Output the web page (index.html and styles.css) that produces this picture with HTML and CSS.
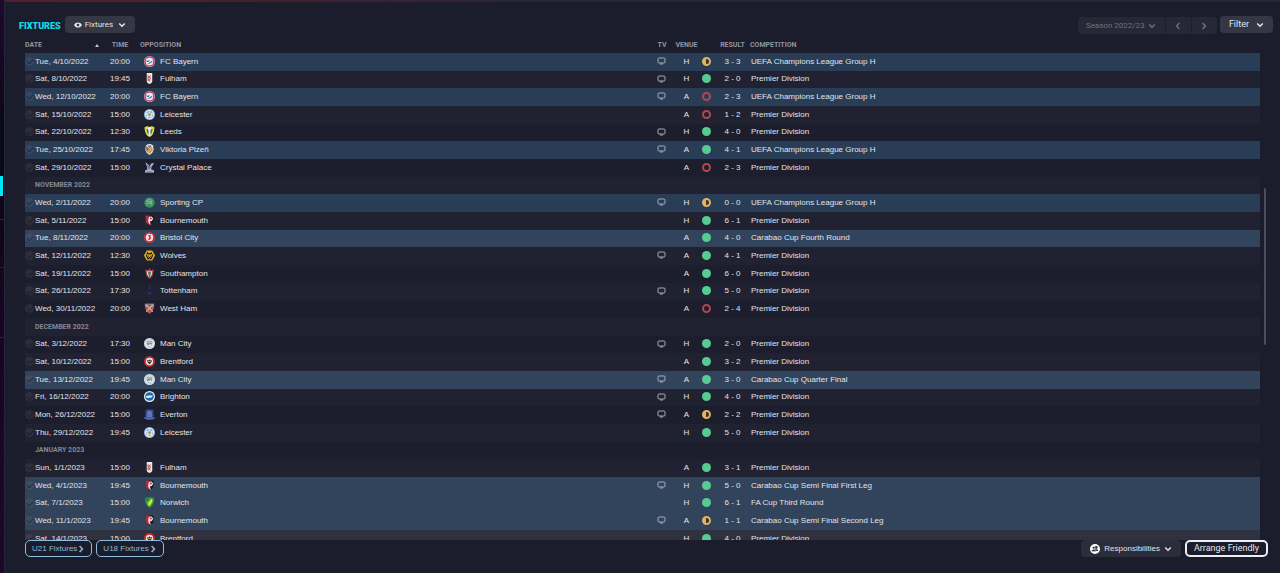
FILE: index.html
```html
<!DOCTYPE html>
<html lang="en">
<head>
<meta charset="utf-8">
<meta name="viewport" content="width=device-width, initial-scale=1">
<title>Fixtures</title>
<link rel="stylesheet" href="styles.css">
</head>
<body>
<svg class="defs" aria-hidden="true">
  <symbol id="down" viewBox="0 0 8 8"><path d="M1.2 2.5 4 5.3l2.8-2.8" fill="none" stroke="currentColor" stroke-width="1.5"/></symbol>
  <symbol id="left" viewBox="0 0 8 8"><path d="M5.4 1 2.6 4l2.8 3" fill="none" stroke="currentColor" stroke-width="1.3"/></symbol>
  <symbol id="right" viewBox="0 0 8 8"><path d="M2.6 1 5.4 4 2.6 7" fill="none" stroke="currentColor" stroke-width="1.5"/></symbol>
  <symbol id="eye" viewBox="0 0 16 12"><path fill="currentColor" fill-rule="evenodd" d="M0 6C2 2 5 .8 8 .8S14 2 16 6c-2 4-5 5.200-8 5.200S2 10 0 6Zm8-2.600a2.600 2.600 0 1 0 0 5.200 2.600 2.600 0 0 0 0-5.200Z"/></symbol>
  <symbol id="people" viewBox="0 0 20 20"><circle cx="10" cy="10" r="10" fill="#fff"/><circle cx="12.500" cy="7" r="2.800" fill="#30323f"/><path d="M8.500 14c0-5 8-5 8 0Z" fill="#30323f"/><circle cx="7.500" cy="7.500" r="2.600" fill="#30323f" stroke="#fff" stroke-width=".8"/><path d="M3 15c0-6 9-6 9 0Z" fill="#30323f" stroke="#fff" stroke-width=".8"/></symbol>
  <symbol id="tv" viewBox="0 0 9 8"><rect x="1" y="1" width="7" height="5" rx="1" fill="none" stroke="currentColor"/><path d="M3 7h3" stroke="currentColor"/></symbol>

  <symbol id="bayern" viewBox="0 0 24 24"><circle cx="12" cy="12" r="12" fill="#e3a9b8"/><circle cx="12" cy="12" r="9.500" fill="none" stroke="#cf3657" stroke-width="3"/><circle cx="12" cy="12" r="8" fill="#e9edf6"/><path d="M5 10h8l-3 3H6Zm5 5 8-5v3l-6 4H8Z" fill="#3f78bd"/></symbol>
  <symbol id="fulham" viewBox="0 0 24 24"><path d="M6 0h12v18q0 5-6 6-6-1-6-6Z" fill="#f0e9e9"/><path d="M9 5v13M15 6l-5 3 5 3-5 3 4 3" fill="none" stroke="#b34145" stroke-width="2"/></symbol>
  <symbol id="leicester" viewBox="0 0 24 24"><circle cx="12" cy="12" r="12" fill="#7fa9dc"/><circle cx="12" cy="12" r="9" fill="none" stroke="#d7e3f1" stroke-width="3"/><path d="m12 3 2.500 5.500L21 9l-4 5 1 6-6-3-6 3 1-6-4-5 6.500-.5Z" fill="#e3e6d8"/><path d="m12 8 4 4-4 5-4-5Z" fill="#a99b65"/></symbol>
  <symbol id="leeds" viewBox="0 0 24 24"><path d="M1 3q6-4 11-1 5-3 11 1-1 17-11 21Q2 20 1 3Z" fill="#dfd93f"/><path d="M5 7h14q-1 9-7 13Q6 16 5 7Z" fill="#396c9a"/><path d="M12 5v16" stroke="#eef3ed" stroke-width="4"/><circle cx="12" cy="6" r="3.500" fill="#f3f5dc"/></symbol>
  <symbol id="plzen" viewBox="0 0 24 24"><path d="M4 3q8-6 16 0l1 10q-2 8-9 11-7-3-9-11Z" fill="#e8e2df"/><path d="m5 4 9 10-3 5-6-5Z" fill="#9a5149"/><path d="m9 12 9-6 1 8-7 8-6-6Z" fill="#c9a34b"/><path d="m7 4 10-1-4 6Z" fill="#65718e"/></symbol>
  <symbol id="palace" viewBox="0 0 24 24"><path d="m3 1 7 5 2 5 3-7 7-2-5 8-2 7H8L6 8Z" fill="#bdd4e9"/><path d="m6 4 5 6-2 5Zm12 0-5 8 2 2Z" fill="#3e69ad"/><path d="M3 18q9-4 18 0l1 5H2Z" fill="#ccd0df"/><path d="M5 20h14" stroke="#5a6a97" stroke-width="2"/><path d="m10 12 2-2 2 6h-4Z" fill="#bc4b62"/></symbol>
  <symbol id="sporting" viewBox="0 0 24 24"><circle cx="12" cy="12" r="11.500" fill="#368459"/><circle cx="12" cy="12" r="8" fill="none" stroke="#5aa27a" stroke-width="2"/><path d="M7 17V8q5-5 9 0v9M9 10h6l-5 4h6" fill="none" stroke="#94bca5" stroke-width="2"/></symbol>
  <symbol id="bournemouth" viewBox="0 0 24 24"><path d="M3 1h18l-1 16-8 7-8-7Z" fill="#25141c"/><path d="M3 1h9v22l-8-6Z" fill="#ad2e3b"/><path d="m9 11 2-7 6-1 3 5-3 5-4 1 2 9-5-6Z" fill="#ece3e4"/><circle cx="15" cy="7.500" r="2.200" fill="#bc3341"/></symbol>
  <symbol id="bristol" viewBox="0 0 24 24"><circle cx="12" cy="12" r="12" fill="#d52d36"/><circle cx="12" cy="12" r="8" fill="#f6e9e9"/><path d="m9 7 6-1-1 5 2 2-4 5-4-3 4-2Z" fill="#c63440"/></symbol>
  <symbol id="wolves" viewBox="0 0 24 24"><path d="M6 1h12l6 11-6 11H6L0 12Z" fill="#deb21c"/><path d="m8 4 2 3h4l2-3 4 8-4 8H8l-4-8Z" fill="#18150f"/><path d="m5 8 5 2h4l5-2-3 7-4 4-4-4Z" fill="#deb21c"/><path d="m8 12 3 1-2 2Zm8 0-3 1 2 2Zm-5 3h2v3h-2Z" fill="#18150f"/></symbol>
  <symbol id="southampton" viewBox="0 0 24 24"><path d="m12 0 3 5 7-2-2 7q1 7-8 14Q3 17 4 10L2 3l7 2Z" fill="#a84650"/><path d="M6 7h12l-1 7-5 7-5-7Z" fill="#e2dfd8"/><path d="M8 8h8l-2 7h-4Z" fill="#56845e"/><path d="M12 14v7" stroke="#be4854" stroke-width="3"/></symbol>
  <symbol id="spurs" viewBox="0 0 24 24"><circle cx="12" cy="18" r="4" fill="#2b2c6b"/><path d="m10 2 4-1-1 4 2 2-2 3-3-2 1-2Z" fill="#2b2c6b"/></symbol>
  <symbol id="westham" viewBox="0 0 24 24"><path d="M2 1h20q2 15-10 23Q0 16 2 1Z" fill="#a54652"/><path d="m5 4 14 15M19 4 5 19" stroke="#e0aa71" stroke-width="3"/><path d="m3 4 5-1-4 5Zm18 0-5-1 4 5Z" fill="#e6c48c"/><path d="M3 3q1 12 9 18 8-6 9-18Z" fill="none" stroke="#7596b8" stroke-width="1.500"/></symbol>
  <symbol id="mancity" viewBox="0 0 24 24"><circle cx="12" cy="12" r="12" fill="#e3ebf3"/><circle cx="12" cy="12" r="10" fill="none" stroke="#8fabc9" stroke-width="1"/><path d="M6 6h12v6q-1 6-6 8-5-2-6-8Z" fill="#7193bb"/><path d="M7 7h10v4H7Z" fill="#d3ba62"/><path d="m8 16 8-3v3l-4 3Z" fill="#eef2f5"/></symbol>
  <symbol id="brentford" viewBox="0 0 24 24"><circle cx="12" cy="12" r="12" fill="#c72833"/><circle cx="12" cy="12" r="8" fill="#eee4dc"/><path d="m6 9 4 1 2-3 2 3 4-1-3 6-3 3-3-3Z" fill="#302627"/><path d="M9 12h6" stroke="#d5ad45" stroke-width="2"/></symbol>
  <symbol id="brighton" viewBox="0 0 24 24"><circle cx="12" cy="12" r="12" fill="#e9f1f7"/><circle cx="12" cy="12" r="9.500" fill="#176bb4"/><path d="m4 11 7-1 9 0-4 4-10 1Z" fill="#f0f4f8"/></symbol>
  <symbol id="everton" viewBox="0 0 24 24"><path d="M4 1h16l1 13q-2 7-9 10-7-3-9-10Z" fill="#364c99"/><path d="M9 5h6l2 12H7Zm-2 4h10" fill="#5a70b2" stroke="#8496c9"/><path d="M1 17q11 5 22 0v4q-11 5-22 0Z" fill="#5569b1"/></symbol>
  <symbol id="norwich" viewBox="0 0 24 24"><path d="M2 2q10-3 20 0 0 15-10 22Q2 17 2 2Z" fill="#32a33f"/><path d="m5 9 5 3 6-9 3 6-4 6-4 5-3-5 2-2Z" fill="#e6df38"/><path d="M4 3h5v4H4Z" fill="#176c34"/></symbol>
</svg>
<div class="app">
  <nav class="rail" aria-label="Sections"><span class="rail-current"></span><span class="rail-item"></span><span class="rail-item"></span><span class="rail-item rail-tall"></span></nav>
  <main class="panel">
    <header class="toolbar">
      <h1 class="title">FIXTURES</h1>
      <button class="button view-button" type="button"><svg class="eye"><use href="#eye"/></svg>Fixtures<svg class="icon"><use href="#down"/></svg></button>
      <div class="season">
        <label class="season-field"><select class="season-select" aria-label="Season" disabled><option>Season 2022/23</option></select><svg class="icon"><use href="#down"/></svg></label>
        <button class="step" type="button" aria-label="Previous season" disabled><svg class="icon"><use href="#left"/></svg></button>
        <button class="step" type="button" aria-label="Next season" disabled><svg class="icon"><use href="#right"/></svg></button>
      </div>
      <button class="button filter-button" type="button">Filter<svg class="icon"><use href="#down"/></svg></button>
    </header>
    <div class="list">
      <table class="fixtures">
        <colgroup><col class="c-date"><col class="c-time"><col class="c-team"><col class="c-tv"><col class="c-venue"><col class="c-outcome"><col class="c-result"><col></colgroup>
        <thead><tr><th aria-sort="ascending"><span class="sorted">DATE<span class="sort-mark"></span></span></th><th class="center">TIME</th><th class="team-head">OPPOSITION</th><th class="center">TV</th><th class="center">VENUE</th><th></th><th class="center">RESULT</th><th>COMPETITION</th></tr></thead>
        <tbody>
          <tr class="europe"><td><label class="date"><input type="checkbox">Tue, 4/10/2022</label></td><td>20:00</td><td><span class="team"><svg class="crest"><use href="#bayern"/></svg>FC Bayern</span></td><td><svg class="tv"><use href="#tv"/></svg></td><td>H</td><td><i class="draw"></i></td><td>3 - 3</td><td>UEFA Champions League Group H</td></tr>
          <tr><td><label class="date"><input type="checkbox">Sat, 8/10/2022</label></td><td>19:45</td><td><span class="team"><svg class="crest"><use href="#fulham"/></svg>Fulham</span></td><td><svg class="tv"><use href="#tv"/></svg></td><td>H</td><td><i class="win"></i></td><td>2 - 0</td><td>Premier Division</td></tr>
          <tr class="europe"><td><label class="date"><input type="checkbox">Wed, 12/10/2022</label></td><td>20:00</td><td><span class="team"><svg class="crest"><use href="#bayern"/></svg>FC Bayern</span></td><td><svg class="tv"><use href="#tv"/></svg></td><td>A</td><td><i class="loss"></i></td><td>2 - 3</td><td>UEFA Champions League Group H</td></tr>
          <tr><td><label class="date"><input type="checkbox">Sat, 15/10/2022</label></td><td>15:00</td><td><span class="team"><svg class="crest"><use href="#leicester"/></svg>Leicester</span></td><td></td><td>A</td><td><i class="loss"></i></td><td>1 - 2</td><td>Premier Division</td></tr>
          <tr><td><label class="date"><input type="checkbox">Sat, 22/10/2022</label></td><td>12:30</td><td><span class="team"><svg class="crest"><use href="#leeds"/></svg>Leeds</span></td><td><svg class="tv"><use href="#tv"/></svg></td><td>H</td><td><i class="win"></i></td><td>4 - 0</td><td>Premier Division</td></tr>
          <tr class="europe"><td><label class="date"><input type="checkbox">Tue, 25/10/2022</label></td><td>17:45</td><td><span class="team"><svg class="crest"><use href="#plzen"/></svg>Viktoria Plzeň</span></td><td><svg class="tv"><use href="#tv"/></svg></td><td>A</td><td><i class="win"></i></td><td>4 - 1</td><td>UEFA Champions League Group H</td></tr>
          <tr><td><label class="date"><input type="checkbox">Sat, 29/10/2022</label></td><td>15:00</td><td><span class="team"><svg class="crest"><use href="#palace"/></svg>Crystal Palace</span></td><td></td><td>A</td><td><i class="loss"></i></td><td>2 - 3</td><td>Premier Division</td></tr>
          <tr><th class="month" colspan="8">NOVEMBER 2022</th></tr>
          <tr class="europe"><td><label class="date"><input type="checkbox">Wed, 2/11/2022</label></td><td>20:00</td><td><span class="team"><svg class="crest"><use href="#sporting"/></svg>Sporting CP</span></td><td><svg class="tv"><use href="#tv"/></svg></td><td>H</td><td><i class="draw"></i></td><td>0 - 0</td><td>UEFA Champions League Group H</td></tr>
          <tr><td><label class="date"><input type="checkbox">Sat, 5/11/2022</label></td><td>15:00</td><td><span class="team"><svg class="crest"><use href="#bournemouth"/></svg>Bournemouth</span></td><td></td><td>H</td><td><i class="win"></i></td><td>6 - 1</td><td>Premier Division</td></tr>
          <tr class="cup"><td><label class="date"><input type="checkbox">Tue, 8/11/2022</label></td><td>20:00</td><td><span class="team"><svg class="crest"><use href="#bristol"/></svg>Bristol City</span></td><td></td><td>A</td><td><i class="win"></i></td><td>4 - 0</td><td>Carabao Cup Fourth Round</td></tr>
          <tr><td><label class="date"><input type="checkbox">Sat, 12/11/2022</label></td><td>12:30</td><td><span class="team"><svg class="crest"><use href="#wolves"/></svg>Wolves</span></td><td><svg class="tv"><use href="#tv"/></svg></td><td>A</td><td><i class="win"></i></td><td>4 - 1</td><td>Premier Division</td></tr>
          <tr><td><label class="date"><input type="checkbox">Sat, 19/11/2022</label></td><td>15:00</td><td><span class="team"><svg class="crest"><use href="#southampton"/></svg>Southampton</span></td><td></td><td>A</td><td><i class="win"></i></td><td>6 - 0</td><td>Premier Division</td></tr>
          <tr><td><label class="date"><input type="checkbox">Sat, 26/11/2022</label></td><td>17:30</td><td><span class="team"><svg class="crest"><use href="#spurs"/></svg>Tottenham</span></td><td><svg class="tv"><use href="#tv"/></svg></td><td>H</td><td><i class="win"></i></td><td>5 - 0</td><td>Premier Division</td></tr>
          <tr><td><label class="date"><input type="checkbox">Wed, 30/11/2022</label></td><td>20:00</td><td><span class="team"><svg class="crest"><use href="#westham"/></svg>West Ham</span></td><td></td><td>A</td><td><i class="loss"></i></td><td>2 - 4</td><td>Premier Division</td></tr>
          <tr><th class="month" colspan="8">DECEMBER 2022</th></tr>
          <tr><td><label class="date"><input type="checkbox">Sat, 3/12/2022</label></td><td>17:30</td><td><span class="team"><svg class="crest"><use href="#mancity"/></svg>Man City</span></td><td><svg class="tv"><use href="#tv"/></svg></td><td>H</td><td><i class="win"></i></td><td>2 - 0</td><td>Premier Division</td></tr>
          <tr><td><label class="date"><input type="checkbox">Sat, 10/12/2022</label></td><td>15:00</td><td><span class="team"><svg class="crest"><use href="#brentford"/></svg>Brentford</span></td><td></td><td>A</td><td><i class="win"></i></td><td>3 - 2</td><td>Premier Division</td></tr>
          <tr class="cup"><td><label class="date"><input type="checkbox">Tue, 13/12/2022</label></td><td>19:45</td><td><span class="team"><svg class="crest"><use href="#mancity"/></svg>Man City</span></td><td><svg class="tv"><use href="#tv"/></svg></td><td>A</td><td><i class="win"></i></td><td>3 - 0</td><td>Carabao Cup Quarter Final</td></tr>
          <tr><td><label class="date"><input type="checkbox">Fri, 16/12/2022</label></td><td>20:00</td><td><span class="team"><svg class="crest"><use href="#brighton"/></svg>Brighton</span></td><td><svg class="tv"><use href="#tv"/></svg></td><td>H</td><td><i class="win"></i></td><td>4 - 0</td><td>Premier Division</td></tr>
          <tr><td><label class="date"><input type="checkbox">Mon, 26/12/2022</label></td><td>15:00</td><td><span class="team"><svg class="crest"><use href="#everton"/></svg>Everton</span></td><td><svg class="tv"><use href="#tv"/></svg></td><td>A</td><td><i class="draw"></i></td><td>2 - 2</td><td>Premier Division</td></tr>
          <tr><td><label class="date"><input type="checkbox">Thu, 29/12/2022</label></td><td>19:45</td><td><span class="team"><svg class="crest"><use href="#leicester"/></svg>Leicester</span></td><td></td><td>H</td><td><i class="win"></i></td><td>5 - 0</td><td>Premier Division</td></tr>
          <tr><th class="month" colspan="8">JANUARY 2023</th></tr>
          <tr><td><label class="date"><input type="checkbox">Sun, 1/1/2023</label></td><td>15:00</td><td><span class="team"><svg class="crest"><use href="#fulham"/></svg>Fulham</span></td><td></td><td>A</td><td><i class="win"></i></td><td>3 - 1</td><td>Premier Division</td></tr>
          <tr class="cup"><td><label class="date"><input type="checkbox">Wed, 4/1/2023</label></td><td>19:45</td><td><span class="team"><svg class="crest"><use href="#bournemouth"/></svg>Bournemouth</span></td><td><svg class="tv"><use href="#tv"/></svg></td><td>H</td><td><i class="win"></i></td><td>5 - 0</td><td>Carabao Cup Semi Final First Leg</td></tr>
          <tr class="cup"><td><label class="date"><input type="checkbox">Sat, 7/1/2023</label></td><td>15:00</td><td><span class="team"><svg class="crest"><use href="#norwich"/></svg>Norwich</span></td><td></td><td>H</td><td><i class="win"></i></td><td>6 - 1</td><td>FA Cup Third Round</td></tr>
          <tr class="cup"><td><label class="date"><input type="checkbox">Wed, 11/1/2023</label></td><td>19:45</td><td><span class="team"><svg class="crest"><use href="#bournemouth"/></svg>Bournemouth</span></td><td><svg class="tv"><use href="#tv"/></svg></td><td>A</td><td><i class="draw"></i></td><td>1 - 1</td><td>Carabao Cup Semi Final Second Leg</td></tr>
          <tr class="hovered"><td><label class="date"><input type="checkbox">Sat, 14/1/2023</label></td><td>15:00</td><td><span class="team"><svg class="crest"><use href="#brentford"/></svg>Brentford</span></td><td></td><td>H</td><td><i class="win"></i></td><td>4 - 0</td><td>Premier Division</td></tr>
        </tbody>
      </table>
      <div class="track"><div class="thumb"></div></div>
    </div>
    <footer class="actions">
      <a class="link-button" href="#u21">U21 Fixtures<svg class="icon"><use href="#right"/></svg></a>
      <a class="link-button" href="#u18">U18 Fixtures<svg class="icon"><use href="#right"/></svg></a>
      <button class="button duties" type="button"><svg class="people"><use href="#people"/></svg>Responsibilities<svg class="icon"><use href="#down"/></svg></button>
      <button class="outline-button" type="button">Arrange Friendly</button>
    </footer>
  </main>
</div>
</body>
</html>
```
FILE: styles.css
```css
* { box-sizing: border-box; }

body {
  margin: 0;
  background: #1b1d2c;
  color: #e2e3e9;
  font: 8px/17px "Liberation Sans", Arial, sans-serif;
}

button, select { font: inherit; color: inherit; }
.defs { position: absolute; width: 0; height: 0; }

.app { display: flex; height: 100vh; overflow: hidden; }

.rail {
  width: 5px;
  padding-top: 176px;
  background: linear-gradient(#21082d, #0c0716 22%, #0c0716 30%, #1b0422 60%, #1d0628);
  border-right: 1px solid #20273a;
}
.rail-current { display: block; width: 3px; height: 20px; background: #00e5f2; }
.rail-item { display: block; height: 24px; border-bottom: 1px solid #35183d; }
.rail-item + .rail-item { height: 48px; }
.rail-item.rail-tall { height: 70px; }

.panel {
  flex: 1;
  min-width: 0;
  display: flex;
  flex-direction: column;
  border-top: 2px solid;
  border-image: linear-gradient(90deg, #54202f, #43202f 22%, #242637 45%) 1;
}

.toolbar {
  display: flex;
  align-items: flex-start;
  flex: none;
  height: 35px;
  padding: 14px 7px 0 14px;
  font-family: Roboto, "Liberation Sans", sans-serif;
}
.title { margin: 2px 4px 0 0; color: #10dfea; font-size: 9px; line-height: 17px; font-weight: 900; }

.icon { width: 8px; height: 8px; flex: none; }
.button {
  display: flex;
  align-items: center;
  height: 17px;
  padding: 0 9px;
  border: 0;
  border-radius: 4px;
  background: #353744;
}
.view-button { gap: 3px; }
.view-button .icon { margin-left: 2px; }
.eye { width: 8px; height: 6px; }

.season {
  display: flex;
  height: 17px;
  margin: 1px 3px 0 auto;
  background: #262838;
  border-radius: 4px;
  color: #6f717d;
}
.season-field { display: flex; align-items: center; width: 87px; padding: 0 9px 0 8px; }
.season-select { flex: 1; min-width: 0; padding: 0; border: 0; background: none; appearance: none; opacity: 1; }
.step { display: flex; align-items: center; justify-content: center; width: 26px; padding: 0; border: 0; border-left: 1px solid #1d1f2e; background: none; }
.filter-button { gap: 7px; font-size: 9px; }

.list { flex: 1; min-height: 0; display: flex; overflow: hidden; padding: 0 14px 0 20px; }
.fixtures { flex: 1; width: 100%; border-collapse: collapse; table-layout: fixed; align-self: flex-start; margin-right: 4px; }
.c-date { width: 80px; }
.c-time { width: 30px; }
.c-team { width: 41.7%; }
.c-tv { width: 24px; }
.c-venue { width: 25px; }
.c-outcome { width: 16px; }
.c-result { width: 35px; }

th, td { padding: 0; text-align: left; white-space: nowrap; }
th { font-family: Roboto, "Liberation Sans", sans-serif; font-size: 7px; font-weight: 700; }
thead th { height: 16px; color: #92949f; line-height: 16px; }
thead .center { text-align: center; }
thead .team-head { padding-left: 5px; }
.sorted { display: flex; align-items: center; justify-content: space-between; padding-right: 6px; }
.sort-mark { border: 2px solid transparent; border-top: 0; border-bottom: 3px solid #c6c7cf; }

tbody tr { height: 18px; background: #1c1e2d; }
tbody tr:nth-child(even) { background: #202131; }
tbody tr:nth-child(3n + 2) { height: 17px; }
tbody tr.europe { background: #2a3d57; }
tbody tr.cup { background: #32445b; }
tbody tr.hovered { background: #2f313f; }
td { padding-bottom: 2px; text-align: center; line-height: 15px; }
td:first-child, td:nth-child(3), td:last-child { text-align: left; }
td:last-child { padding-left: 1px; }
.month { padding-left: 10px; color: #858792; line-height: 17px; }

.date { display: flex; align-items: center; gap: 1px; }
.date input {
  display: grid;
  place-items: center;
  width: 9px;
  height: 9px;
  margin: 0;
  appearance: none;
  border-radius: 50%;
  background: #8a8b9a22;
}
.date input::after {
  content: "";
  width: 5px;
  height: 3px;
  border: solid #11131f88;
  border-width: 0 0 1px 1px;
  transform: rotate(-45deg);
}
.team { display: flex; align-items: center; gap: 5px; padding-left: 9px; }
.crest { width: 11px; height: 11px; }
.tv { display: block; width: 9px; height: 8px; margin: 0 auto; color: #a6aab4; }

.win, .draw, .loss { display: block; width: 9px; height: 9px; margin: 0 auto; border-radius: 50%; }
.win { background: #56cc92; }
.draw { border: 2px solid #e2b45c; background: linear-gradient(90deg, #e2b45c 50%, #3a3335 50%); }
.loss { border: 2px solid #b5464f; }

.track { width: 2px; flex: none; padding-top: 151px; }
.thumb { height: 32vh; max-height: 157px; border-radius: 1px; background: #4b4d5a; }

.actions { display: flex; align-items: flex-start; flex: none; height: 33px; padding: 0 12px 0 20px; gap: 4px; }
.link-button, .outline-button {
  display: flex;
  align-items: center;
  height: 17px;
  padding: 0 6px;
  border: 1px solid #8dbde0;
  border-radius: 5px;
  background: none;
  color: #91b9d8;
  text-decoration: none;
}
.duties { margin-left: auto; gap: 4px; background: #2b2d3b; }
.people { width: 10px; height: 10px; }
.outline-button {
  padding: 0 7px;
  border: 2px solid #eeeef2;
  color: #e4e5ea;
  font-family: Roboto, "Liberation Sans", sans-serif;
  font-size: 9px;
}
```
